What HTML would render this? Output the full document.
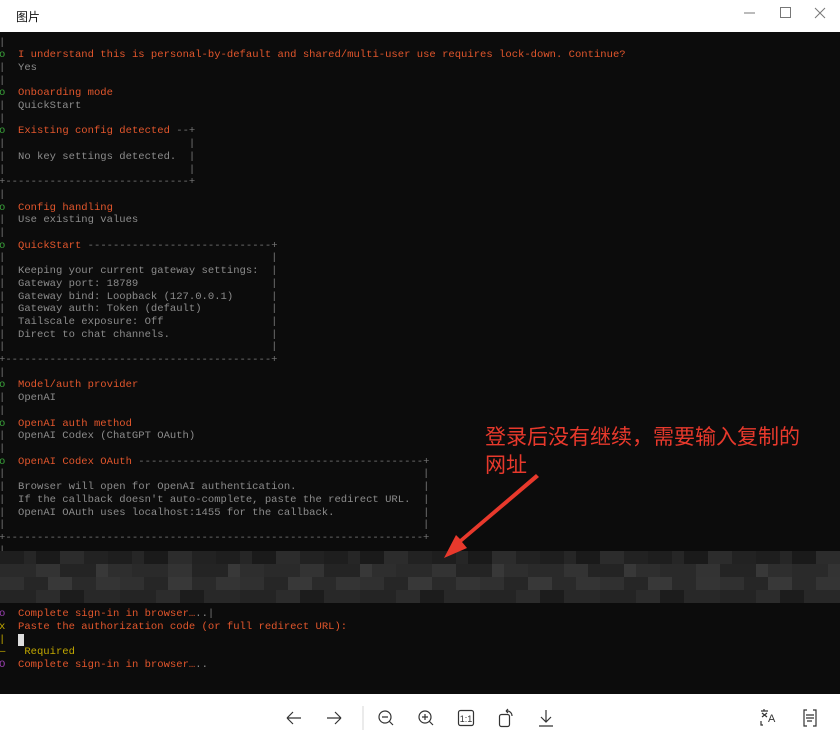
<!DOCTYPE html>
<html><head><meta charset="utf-8"><style>
*{margin:0;padding:0;box-sizing:border-box}
body{width:840px;height:742px;overflow:hidden;background:#fff;position:relative;font-family:"Liberation Sans","Noto Sans CJK SC",sans-serif}
#title{position:absolute;left:16px;top:8px;font-size:12px;color:#111}
#term{position:absolute;left:0;top:32px;width:840px;height:662px;background:#0c0c0c;overflow:hidden}
pre{position:absolute;left:-1px;top:4.5px;font-family:"Liberation Mono",monospace;font-size:10.55px;line-height:12.7px;color:#8c8c8c;white-space:pre}
.r{color:#e2562c}.g{color:#3aa33a}.y{color:#c2a800}.p{color:#9a3fb0}.b{color:#777}
.blur{position:absolute;left:0;width:840px;height:13px}
svg{display:block}
</style></head><body>
<div id="title">图片</div>
<svg style="position:absolute;left:740px;top:6px" width="95" height="14" viewBox="0 0 95 14"><path d="M4 7h11" stroke="#777" stroke-width="1"/><rect x="40.5" y="1.5" width="10" height="10" fill="none" stroke="#777"/><path d="M75 2l10 10M85 2l-10 10" stroke="#777"/></svg>
<div id="term">
<pre><span class="b">|</span>
<span class="g">o</span>  <span class="r">I understand this is personal-by-default and shared/multi-user use requires lock-down. Continue?</span>
<span class="b">|</span>  Yes
<span class="b">|</span>
<span class="g">o</span>  <span class="r">Onboarding mode</span>
<span class="b">|</span>  QuickStart
<span class="b">|</span>
<span class="g">o</span>  <span class="r">Existing config detected</span> <span class="b">--+</span>
<span class="b">|                             |</span>
<span class="b">|</span>  No key settings detected.  <span class="b">|</span>
<span class="b">|                             |</span>
<span class="b">+-----------------------------+</span>
<span class="b">|</span>
<span class="g">o</span>  <span class="r">Config handling</span>
<span class="b">|</span>  Use existing values
<span class="b">|</span>
<span class="g">o</span>  <span class="r">QuickStart</span> <span class="b">-----------------------------+</span>
<span class="b">|                                          |</span>
<span class="b">|</span>  Keeping your current gateway settings:  <span class="b">|</span>
<span class="b">|</span>  Gateway port: 18789                     <span class="b">|</span>
<span class="b">|</span>  Gateway bind: Loopback (127.0.0.1)      <span class="b">|</span>
<span class="b">|</span>  Gateway auth: Token (default)           <span class="b">|</span>
<span class="b">|</span>  Tailscale exposure: Off                 <span class="b">|</span>
<span class="b">|</span>  Direct to chat channels.                <span class="b">|</span>
<span class="b">|                                          |</span>
<span class="b">+------------------------------------------+</span>
<span class="b">|</span>
<span class="g">o</span>  <span class="r">Model/auth provider</span>
<span class="b">|</span>  OpenAI
<span class="b">|</span>
<span class="g">o</span>  <span class="r">OpenAI auth method</span>
<span class="b">|</span>  OpenAI Codex (ChatGPT OAuth)
<span class="b">|</span>
<span class="g">o</span>  <span class="r">OpenAI Codex OAuth</span> <span class="b">---------------------------------------------+</span>
<span class="b">|                                                                  |</span>
<span class="b">|</span>  Browser will open for OpenAI authentication.                    <span class="b">|</span>
<span class="b">|</span>  If the callback doesn't auto-complete, paste the redirect URL.  <span class="b">|</span>
<span class="b">|</span>  OpenAI OAuth uses localhost:1455 for the callback.              <span class="b">|</span>
<span class="b">|                                                                  |</span>
<span class="b">+------------------------------------------------------------------+</span>
<span class="b">|</span>




<span class="p">o</span>  <span class="r">Complete sign-in in browser…</span>..<span class="b">|</span>
<span class="y">x</span>  <span class="r">Paste the authorization code (or full redirect URL):</span>
<span class="y">|</span>  <span style="background:#ddd">&nbsp;</span>
<span class="y">—   Required</span>
<span class="p">O</span>  <span class="r">Complete sign-in in browser…</span>..</pre>
<div class="blur" style="top:519px;background:repeating-linear-gradient(90deg,#1e1e1e 0 24px,#262626 24px 36px,#1a1a1a 36px 60px,#2c2c2c 60px 84px,#222 84px 108px)"></div>
<div class="blur" style="top:532px;background:repeating-linear-gradient(90deg,#2a2a2a 0 36px,#333 36px 60px,#242424 60px 96px,#383838 96px 108px,#2e2e2e 108px 132px)"></div>
<div class="blur" style="top:545px;background:repeating-linear-gradient(90deg,#303030 0 24px,#262626 24px 48px,#383838 48px 72px,#2a2a2a 72px 96px,#343434 96px 120px)"></div>
<div class="blur" style="top:558px;background:repeating-linear-gradient(90deg,#242424 0 36px,#2c2c2c 36px 60px,#1c1c1c 60px 84px,#282828 84px 120px)"></div>
<div style="position:absolute;left:485px;top:390px;font-size:21px;line-height:28px;color:#e8392c;font-family:'Noto Sans CJK SC',sans-serif">登录后没有继续，需要输入复制的<br>网址</div>
<svg style="position:absolute;left:0;top:0" width="840" height="662"><path d="M539 445 L462 510 L467 516 L444 526 L456 503 L460 507 L536 442 Z" fill="#e8392c"/></svg>
</div>
<svg style="position:absolute;left:280px;top:706px" width="560" height="26" viewBox="0 0 560 26" fill="none" stroke="#333" stroke-width="1.2">
<path d="M7 12h14M7 12l6-6M7 12l6 6"/>
<path d="M47 12h14M61 12l-6-6M61 12l-6 6"/>
<path d="M83 0v24" stroke="#ddd"/>
<circle cx="105" cy="11" r="6"/><path d="M102 11h6M109 15l4 4"/>
<circle cx="145" cy="11" r="6"/><path d="M142 11h6M145 8v6M149 15l4 4"/>
<rect x="178.5" y="4.5" width="15" height="15" rx="2"/><text x="186" y="16" font-size="9" fill="#333" stroke="none" text-anchor="middle" font-family="Liberation Sans">1:1</text>
<rect x="219.5" y="8.5" width="10" height="12" rx="2"/><path d="M226 5a5 5 0 0 1 6 5M226 5l2-2M226 5l2 2"/>
<path d="M266 4v12M261 11l5 5 5-5M259 20h14"/>
<text x="488" y="16" font-size="11" fill="#333" stroke="none" font-family="Liberation Sans">A</text><path d="M481 5h7M484 3v2M482 7l5 4M487 7l-5 4M481 15v4h2"/>
<path d="M527 4h-3v16h3M533 4h3v16h-3M526 9h8M526 12h8M527 15h5"/>
</svg>
</body></html>
